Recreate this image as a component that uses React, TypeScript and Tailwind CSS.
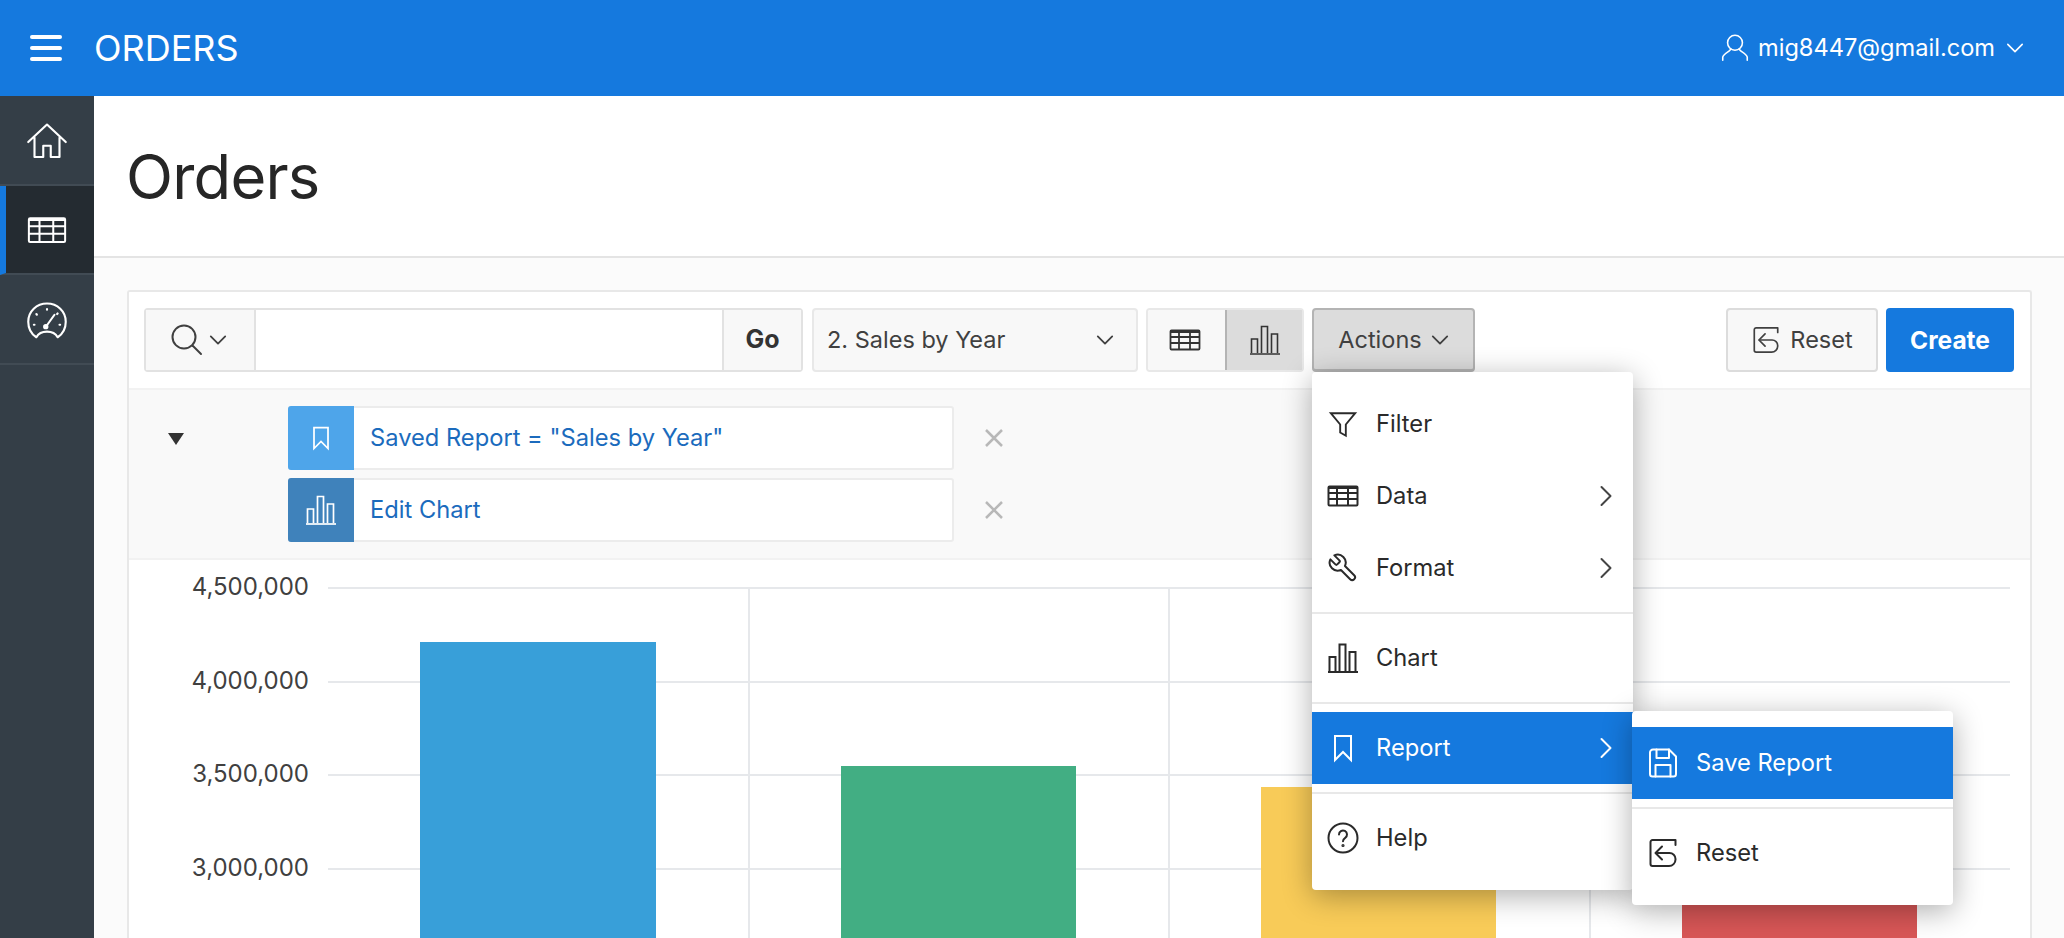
import type { ReactNode } from 'react'

function Svg({ size = 32, sw = 2, className = '', children }: { size?: number; sw?: number; className?: string; children: ReactNode }) {
  return (
    <svg width={size} height={size} viewBox="0 0 32 32" fill="none" stroke="currentColor" strokeWidth={sw} strokeLinecap="round" strokeLinejoin="round" className={`shrink-0 ${className}`}>
      {children}
    </svg>
  )
}

type IconProps = { size?: number; sw?: number; className?: string }

const TableIcon = (p: IconProps) => (
  <Svg {...p}>
    <rect x="1.5" y="6.5" width="29" height="19" rx="1" strokeLinejoin="miter" />
    <path d="M1.5 8h29M1.5 13h29M1.5 19h29M10 8v17M21 8v17" strokeLinecap="butt" />
  </Svg>
)
const ChartIcon = (p: IconProps) => (
  <Svg {...p}>
    <path d="M1 30h30" strokeLinecap="butt" />
    <path d="M2.5 29V15h6v14M12.5 29V2.500h6V29M22.500 29V10h6v19" strokeLinejoin="miter" strokeLinecap="butt" />
  </Svg>
)
const BookmarkIcon = (p: IconProps) => (
  <Svg {...p}>
    <path d="M8 4h16v24l-8-8-8 8z" strokeLinejoin="miter" />
  </Svg>
)
const HomeIcon = (p: IconProps) => (
  <Svg {...p}>
    <path d="M1 16 16 2l15 14M6 12.500V28h7v-9h6v9h7V12.500" />
  </Svg>
)
const GaugeIcon = (p: IconProps) => (
  <Svg {...p}>
    <path d="M7.500 29C3.500 26.300 1 21.500 1 16.500 1 8.200 7.700 2 16 2s15 6.200 15 14.500c0 5-2.500 9.800-6.500 12.500-1.500-2.800-4.800-4.500-8.500-4.500S9 26.200 7.500 29z" />
    <path d="M15.500 20 22 11" />
    <circle cx="15" cy="20.500" r="1.300" fill="currentColor" />
    <path d="M16 6.500v.5M7.500 10.500l.4.4M24.500 10l-.4.400M5.500 19h.5M26 19h.5" />
  </Svg>
)
const FilterIcon = (p: IconProps) => (
  <Svg {...p}>
    <path d="M3 4.500h26L19 16.500v12l-6-3.500v-8.500z" strokeLinejoin="miter" />
  </Svg>
)
const WrenchIcon = ({ size = 32, className = '' }: IconProps) => (
  <svg width={size} height={size} viewBox="0 0 24 24" fill="none" stroke="currentColor" strokeWidth={1.5} strokeLinecap="round" strokeLinejoin="round" className={`shrink-0 -scale-x-100 ${className}`}>
    <path d="M14.700 6.300a1 1 0 0 0 0 1.400l1.600 1.600a1 1 0 0 0 1.400 0l3.770-3.770a6 6 0 0 1-7.940 7.940l-6.910 6.910a2.120 2.120 0 0 1-3-3l6.910-6.910a6 6 0 0 1 7.940-7.940l-3.760 3.760z" />
  </svg>
)
const HelpIcon = (p: IconProps) => (
  <Svg {...p}>
    <circle cx="16" cy="16" r="14.500" />
    <path d="M12 12.500a4 4 0 1 1 6.200 3.300c-1.500 1-2.200 1.700-2.200 3.400" />
    <circle cx="16" cy="23.500" r="0.600" fill="currentColor" />
  </Svg>
)
const SaveIcon = (p: IconProps) => (
  <Svg {...p}>
    <path d="M6 2.500h16l7 7V27a2.500 2.500 0 0 1-2.500 2.500h-21A2.500 2.500 0 0 1 3 27V5.500a3 3 0 0 1 3-3z" />
    <path d="M9.500 2.500V11h12.500V2.500M8.500 29.500V18h15v11.500" />
  </Svg>
)
const ResetIcon = (p: IconProps) => (
  <Svg {...p}>
    <path d="M28.500 8V3H5.500A2 2 0 0 0 3.500 5v22a2 2 0 0 0 2 2H22a6.500 6.500 0 0 0 6.500-6.500v-.5a6 6 0 0 0-6-6H9" />
    <path d="M15 9.500 8.500 16l6.500 6.500" />
  </Svg>
)
const ChevronDown = ({ size = 20, sw = 2, className = '' }: IconProps) => (
  <svg width={size} height={size} viewBox="0 0 20 20" fill="none" stroke="currentColor" strokeWidth={sw} strokeLinecap="round" strokeLinejoin="round" className={`shrink-0 ${className}`}>
    <path d="M2 6l8 8 8-8" />
  </svg>
)
const ChevronRight = ({ className = '' }: { className?: string }) => (
  <svg width="12" height="22" viewBox="0 0 12 22" fill="none" stroke="currentColor" strokeWidth="2" strokeLinecap="round" strokeLinejoin="round" className={`shrink-0 ${className}`}>
    <path d="M1.500 2l9 9-9 9" />
  </svg>
)

function MenuItem({ icon, label, arrow, active }: { icon: ReactNode; label: string; arrow?: boolean; active?: boolean }) {
  return (
    <div className={`flex h-[72px] items-center pl-[15px] pr-[21px] text-[23.7px] ${active ? 'bg-[#1579de] text-white' : 'text-[#2a2a2a]'}`}>
      <span className="flex w-[32px] justify-center">{icon}</span>
      <span className="ml-[17px] flex-1">{label}</span>
      {arrow && <ChevronRight className={active ? 'text-white' : 'text-[#444]'} />}
    </div>
  )
}

const Sep = () => <div className="my-2 h-0.5 bg-[#e8e8e8]" />

function ActionsMenu() {
  return (
    <div className="absolute left-0 top-[64px] z-20 w-[321px] rounded-[4px] bg-white py-4 shadow-[0_6px_30px_rgba(0,0,0,0.32)]">
      <MenuItem icon={<FilterIcon size={30} />} label="Filter" />
      <MenuItem icon={<TableIcon />} label="Data" arrow />
      <MenuItem icon={<WrenchIcon />} label="Format" arrow />
      <Sep />
      <MenuItem icon={<ChartIcon />} label="Chart" />
      <Sep />
      <div className="relative">
        <MenuItem icon={<BookmarkIcon />} label="Report" arrow active />
        <div className="absolute left-[320px] top-[-1px] z-30 w-[321px] rounded-[4px] bg-white py-4 shadow-[0_6px_30px_rgba(0,0,0,0.32)]">
          <MenuItem icon={<SaveIcon />} label="Save Report" active />
          <Sep />
          <MenuItem icon={<ResetIcon />} label="Reset" />
        </div>
      </div>
      <Sep />
      <MenuItem icon={<HelpIcon />} label="Help" />
    </div>
  )
}

function FilterRow({ color, icon, label }: { color: string; icon: ReactNode; label: string }) {
  return (
    <div className="flex items-center">
      <div className="flex h-16 w-[666px] rounded-[3px] border-y-2 border-r-2 border-[#ececec] bg-white">
        <div className={`-my-0.5 flex w-[66px] items-center justify-center rounded-l-[3px] text-white ${color}`}>{icon}</div>
        <span className="flex items-center pl-4 text-[23.7px] text-[#1b6bbd]">{label}</span>
      </div>
      <svg width="20" height="20" viewBox="0 0 20 20" className="ml-[30px] text-[#b8b8b8]" stroke="currentColor" strokeWidth="2.500">
        <path d="M2 2l16 16M18 2 2 18" />
      </svg>
    </div>
  )
}

const BARS = [
  { x: 291, top: 642, w: 236, fill: '#389fd9' },
  { x: 712, top: 766, w: 235, fill: '#42ae83' },
  { x: 1132, top: 787, w: 235, fill: '#f8cb58' },
  { x: 1553, top: 880, w: 235, fill: '#d95757' },
]
const TICKS = [
  { y: 588, label: '4,500,000' },
  { y: 682, label: '4,000,000' },
  { y: 775, label: '3,500,000' },
  { y: 869, label: '3,000,000' },
]

function Chart() {
  return (
    <svg width="1900" height="380" className="block" style={{ fontFamily: 'Inter, sans-serif' }}>
      {TICKS.map((t) => (
        <g key={t.y}>
          <line x1="199" x2="1881" y1={t.y - 560} y2={t.y - 560} stroke="#e6e8eb" strokeWidth="2" />
          <text x="180" y={t.y - 560} dominantBaseline="middle" textAnchor="end" fontSize="24" fill="#404040">
            {t.label}
          </text>
        </g>
      ))}
      {[620, 1040, 1461].map((x) => (
        <line key={x} x1={x} x2={x} y1="28" y2="380" stroke="#e6e8eb" strokeWidth="2" />
      ))}
      {BARS.map((b) => (
        <rect key={b.x} x={b.x} y={b.top - 560} width={b.w} height={380} fill={b.fill} />
      ))}
    </svg>
  )
}

export default function App() {
  return (
    <div className="flex h-screen flex-col overflow-hidden bg-white font-['Inter',sans-serif] text-[#262626]">
      <header className="flex h-24 shrink-0 items-center bg-[#1579de] pl-[30px] pr-[39px] text-white">
        <div className="flex w-8 flex-col gap-[7px]">
          <div className="h-1 rounded-full bg-white" />
          <div className="h-1 rounded-full bg-white" />
          <div className="h-1 rounded-full bg-white" />
        </div>
        <span className="ml-[32px] text-[36px] leading-none">ORDERS</span>
        <div className="ml-auto flex items-center">
          <Svg size={28} sw={1.800}>
            <circle cx="16" cy="10" r="8.500" />
            <path d="M11 17c0 3-8 4.500-9 9.500V30M21 17c0 3 8 4.500 9 9.500V30" />
          </Svg>
          <span className="ml-[9px] text-[23.6px]">mig8447@gmail.com</span>
          <ChevronDown size={18} sw={1.800} className="ml-[11px] mr-[1px]" />
        </div>
      </header>

      <div className="flex min-h-0 flex-1">
        <aside className="w-[94px] shrink-0 bg-[#343e47] text-white">
          <div className="flex h-[90px] items-center justify-center border-b-2 border-[#414b54] pt-[3px]">
            <HomeIcon size={40} sw={1.700} />
          </div>
          <div className="flex h-[89px] items-center justify-center border-b-2 border-l-[6px] border-[#414b54] border-l-[#1579de] bg-[#242b31] pr-[6px] pt-[1px]">
            <TableIcon size={40} sw={1.600} />
          </div>
          <div className="flex h-[90px] items-center justify-center border-b-2 border-[#414b54] pt-[3px]">
            <GaugeIcon size={40} sw={1.700} />
          </div>
        </aside>

        <main className="min-w-0 flex-1 bg-[#fbfbfb]">
          <div className="flex h-[162px] items-center border-b-2 border-[#e4e4e4] bg-white pl-[32px] pt-[1px]">
            <h1 className="text-[61.500px] font-normal leading-none tracking-[-0.8px]">Orders</h1>
          </div>

          <div className="ml-[33px] mr-[32px] mt-8 rounded-t-[3px] border-2 border-b-0 border-[#e8e8e8] bg-white">
            <div className="flex h-[96px] items-center pl-[15px] pr-[16px] text-[23.5px]">
              <div className="flex h-16 w-[659px] rounded-[4px] border-2 border-[#e2e2e2]">
                <div className="flex w-[110px] items-center justify-center gap-[6px] border-r-2 border-[#e2e2e2] bg-[#f8f8f8] pr-[3px] text-[#404040]">
                  <svg width="32" height="32" viewBox="0 0 32 32" fill="none" stroke="currentColor" strokeWidth="2" strokeLinecap="round">
                    <circle cx="13" cy="13" r="11.500" />
                    <path d="M21.500 21.500 30 30" />
                  </svg>
                  <ChevronDown size={18} />
                </div>
                <div className="flex-1" />
                <div className="flex w-[79px] items-center justify-center border-l-2 border-[#e2e2e2] bg-[#f8f8f8] text-[25px] font-bold text-[#333]">Go</div>
              </div>

              <div className="ml-[9px] flex h-16 w-[326px] items-center rounded-[4px] border-2 border-[#e8e8e8] bg-[#f8f8f8] pl-[13px] pr-[22px] text-[#404040]">
                <span className="flex-1">2. Sales by Year</span>
                <ChevronDown size={18} />
              </div>

              <div className="ml-2 flex h-16 w-[158px] overflow-hidden rounded-[4px] border-2 border-[#e8e8e8] text-[#333]">
                <div className="flex flex-1 items-center justify-center bg-[#f8f8f8] pr-1">
                  <TableIcon sw={1.800} />
                </div>
                <div className="-my-0.5 -mr-0.5 flex w-[79px] items-center justify-center rounded-r-[4px] border-2 border-[#b4b4b4] bg-[#dcdcdc]">
                  <ChartIcon sw={1.600} />
                </div>
              </div>

              <div className="relative ml-2">
                <div className="flex h-16 w-[163px] items-center justify-center gap-[9px] rounded-[4px] border-2 border-b-[3px] border-[#b4b4b4] bg-[#dcdcdc] text-[#404040]">
                  Actions
                  <ChevronDown size={18} />
                </div>
                <ActionsMenu />
              </div>

              <div className="ml-auto flex h-16 w-[152px] items-center justify-center gap-[9px] rounded-[4px] border-2 border-[#dcdcdc] bg-[#f8f8f8] text-[#404040]">
                <ResetIcon size={30} sw={1.800} />
                Reset
              </div>
              <div className="ml-[8px] flex h-16 w-[128px] items-center justify-center rounded-[4px] bg-[#1579de] text-[24.5px] font-bold text-white">Create</div>
            </div>

            <div className="flex h-[172px] border-y-2 border-[#f2f2f2] bg-[#f9f9f9]">
              <div className="ml-[39px] mt-[43px] h-0 w-0 border-x-8 border-t-[12px] border-x-transparent border-t-[#333]" />
              <div className="ml-[104px] mt-4 flex flex-col gap-2">
                <FilterRow color="bg-[#4ea5ea]" icon={<BookmarkIcon size={28} sw={2} />} label={'Saved Report = "Sales by Year"'} />
                <FilterRow color="bg-[#3f82bb]" icon={<ChartIcon sw={1.700} />} label="Edit Chart" />
              </div>
            </div>

            <Chart />
          </div>
        </main>
      </div>
    </div>
  )
}
